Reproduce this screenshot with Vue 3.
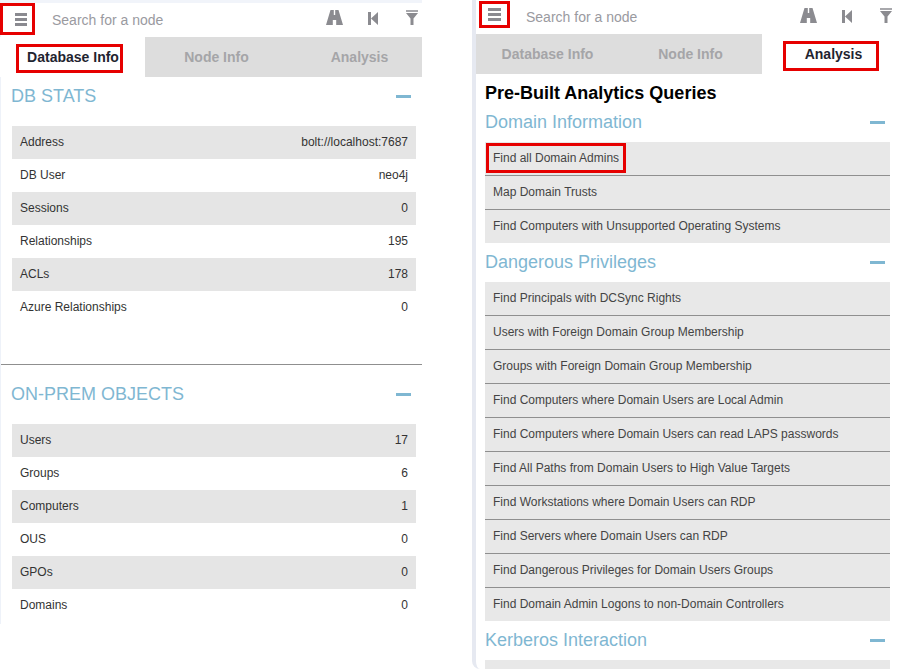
<template>
  <div class="page">
    <section class="panel panel-left">
      <div class="search-row">
        <button class="menu-btn"><span></span><span></span><span></span></button>
        <span class="search-text">Search for a node</span>
        <div class="tools">
          <svg width="17" height="15" viewBox="0 0 17 15"><path d="M4.5 0h3.3v5h1.4V0h3.3L17 15h-6.8v-5H6.8v5H0z" fill="#8b8b90" /></svg>
          <svg class="tool-back" width="10" height="13" viewBox="0 0 10 13"><path d="M0 0h3v13H0zM3 6.5L10 0v13z" fill="#8b8b90" /></svg>
          <svg class="tool-filter" width="12" height="15" viewBox="0 0 12 15"><path d="M0 0h12v2H0z" fill="#a8a8ac" /><path d="M0 3h12L7.5 8.5V15h-3V8.5z" fill="#8b8b90" /></svg>
        </div>
      </div>
      <div class="tabs">
        <div class="tab active tab-db"><span class="marked mark-db">Database Info</span></div>
        <div class="tab">Node Info</div>
        <div class="tab">Analysis</div>
      </div>

      <div class="stats-head">
        <h2>DB STATS</h2>
        <i class="dash"></i>
      </div>
      <div class="stats">
        <div v-for="row in dbStats" :key="row[0]" class="stat-row">
          <span>{{ row[0] }}</span><span>{{ row[1] }}</span>
        </div>
      </div>
      <hr class="divider" />
      <div class="stats-head">
        <h2>ON-PREM OBJECTS</h2>
        <i class="dash"></i>
      </div>
      <div class="stats">
        <div v-for="row in objects" :key="row[0]" class="stat-row">
          <span>{{ row[0] }}</span><span>{{ row[1] }}</span>
        </div>
      </div>
    </section>

    <section class="panel panel-right">
      <div class="search-row">
        <button class="menu-btn"><span></span><span></span><span></span></button>
        <span class="search-text">Search for a node</span>
        <div class="tools">
          <svg width="17" height="15" viewBox="0 0 17 15"><path d="M4.5 0h3.3v5h1.4V0h3.3L17 15h-6.8v-5H6.8v5H0z" fill="#8b8b90" /></svg>
          <svg class="tool-back" width="10" height="13" viewBox="0 0 10 13"><path d="M0 0h3v13H0zM3 6.5L10 0v13z" fill="#8b8b90" /></svg>
          <svg class="tool-filter" width="12" height="15" viewBox="0 0 12 15"><path d="M0 0h12v2H0z" fill="#a8a8ac" /><path d="M0 3h12L7.5 8.5V15h-3V8.5z" fill="#8b8b90" /></svg>
        </div>
      </div>
      <div class="tabs">
        <div class="tab">Database Info</div>
        <div class="tab">Node Info</div>
        <div class="tab active"><span class="marked mark-analysis">Analysis</span></div>
      </div>

      <div class="queries">
        <h1>Pre-Built Analytics Queries</h1>
        <template v-for="group in queries" :key="group.title">
          <div class="query-head">
            <h3>{{ group.title }}</h3>
            <i class="dash"></i>
          </div>
          <div class="query-list">
            <div v-for="item in group.items" :key="item" class="query-row">
              <span :class="{ 'marked mark-query': item === 'Find all Domain Admins' }">{{ item }}</span>
            </div>
          </div>
        </template>
      </div>
    </section>
  </div>
</template>

<script setup>
const dbStats = [
  ['Address', 'bolt://localhost:7687'],
  ['DB User', 'neo4j'],
  ['Sessions', '0'],
  ['Relationships', '195'],
  ['ACLs', '178'],
  ['Azure Relationships', '0'],
]

const objects = [
  ['Users', '17'],
  ['Groups', '6'],
  ['Computers', '1'],
  ['OUS', '0'],
  ['GPOs', '0'],
  ['Domains', '0'],
]

const queries = [
  {
    title: 'Domain Information',
    items: ['Find all Domain Admins', 'Map Domain Trusts', 'Find Computers with Unsupported Operating Systems'],
  },
  {
    title: 'Dangerous Privileges',
    items: [
      'Find Principals with DCSync Rights',
      'Users with Foreign Domain Group Membership',
      'Groups with Foreign Domain Group Membership',
      'Find Computers where Domain Users are Local Admin',
      'Find Computers where Domain Users can read LAPS passwords',
      'Find All Paths from Domain Users to High Value Targets',
      'Find Workstations where Domain Users can RDP',
      'Find Servers where Domain Users can RDP',
      'Find Dangerous Privileges for Domain Users Groups',
      'Find Domain Admin Logons to non-Domain Controllers',
    ],
  },
  {
    title: 'Kerberos Interaction',
    items: [''],
  },
]
</script>

<style scoped>
.page {
  display: flex;
  width: 900px;
  height: 669px;
  overflow: hidden;
  background: #fff;
  font-family: "Liberation Sans", Arial, sans-serif;
  color: #333;
}

.panel {
  flex: none;
  box-sizing: border-box;
}

.panel-left {
  width: 422px;
  height: 624px;
  padding-top: 3px;
  box-shadow: inset 1px 0 0 #eef2f9, inset 0 3px 0 #f1f4fa;
}

.panel-right {
  width: 428px;
  height: 669px;
  margin-left: 50px;
  border-left: 4px solid #e6e9f1;
  border-bottom-left-radius: 8px;
}

.search-row {
  display: flex;
  align-items: center;
  height: 34px;
}

.menu-btn {
  position: relative;
  display: flex;
  flex-direction: column;
  justify-content: center;
  gap: 2px;
  box-sizing: border-box;
  margin: 0;
  border: 0;
  background: none;
}

.panel-left .menu-btn {
  width: 35px;
  height: 32px;
  padding: 0 8px 0 15px;
  top: -1px;
}

.panel-right .menu-btn {
  width: 31px;
  height: 27px;
  margin-left: 3px;
  padding: 0 9px;
  top: -2.5px;
}

.menu-btn span {
  display: block;
  height: 3px;
  background: #8a8a90;
}

.menu-btn::after {
  content: "";
  position: absolute;
  inset: 0;
  border: 3px solid #e60000;
}

.search-text {
  margin-left: 17px;
  font-size: 14px;
  color: #9a9a9f;
}

.panel-right .search-text {
  margin-left: 16px;
}

.tools {
  display: flex;
  align-items: flex-start;
  margin-left: auto;
  padding-right: 4px;
  padding-bottom: 5px;
}

.panel-right .tools {
  padding-right: 8px;
  padding-bottom: 3px;
}

.tool-back {
  margin: 2px 28px 0 25px;
}

.tabs {
  display: flex;
  height: 40px;
  overflow: hidden;
  font-size: 14px;
  font-weight: 700;
  color: #a5a5a8;
}

.tab {
  flex: none;
  display: flex;
  align-items: center;
  justify-content: center;
  width: 143px;
  background: #ddd;
}

.tab.active {
  background: #fff;
  color: #1f2430;
}

.tab-db {
  box-sizing: border-box;
  width: 145px;
  padding-left: 1px;
}

.marked {
  position: relative;
}

.marked::after {
  content: "";
  position: absolute;
  border: 3px solid #e60000;
}

.mark-db::after {
  inset: -5px -4px -8px -11px;
}

.mark-analysis::after {
  inset: -5px -17px -9px -22px;
}

.mark-query::after {
  inset: -8px -7px -8px -7px;
}

.stats-head {
  display: flex;
  align-items: center;
  justify-content: space-between;
  height: 38px;
  padding: 0 11px;
  margin-bottom: 11px;
}

h1,
h2,
h3 {
  margin: 0;
  font-weight: 400;
}

h2,
h3 {
  font-size: 18px;
  color: #7fb7d2;
}

.dash {
  display: block;
  width: 15px;
  height: 3px;
  background: #7fb7d2;
}

.stats {
  padding: 0 6px 0 12px;
}

.stat-row {
  display: flex;
  align-items: center;
  justify-content: space-between;
  box-sizing: border-box;
  height: 33px;
  padding: 0 8px 2px;
  font-size: 12px;
}

.stat-row:nth-child(odd) {
  background: #e5e5e5;
}

.divider {
  height: 1px;
  margin: 40px 0 10px 1px;
  border: 0;
  background: #8f8f8f;
}

.queries {
  padding: 0 10px 0 9px;
}

h1 {
  margin-top: 10px;
  font-size: 18px;
  font-weight: 700;
  color: #000;
  line-height: 19px;
}

.query-head {
  display: flex;
  align-items: center;
  justify-content: space-between;
  box-sizing: border-box;
  height: 39px;
  padding: 0 5px 1px 0;
}

.query-row {
  display: flex;
  align-items: center;
  box-sizing: border-box;
  height: 34px;
  padding: 0 8px 2px;
  font-size: 12px;
  background: #e8e8e8;
  color: #444;
  border-bottom: 1px solid #8f8f8f;
}

.query-row:last-child {
  height: 33px;
  border-bottom: 0;
}
</style>
